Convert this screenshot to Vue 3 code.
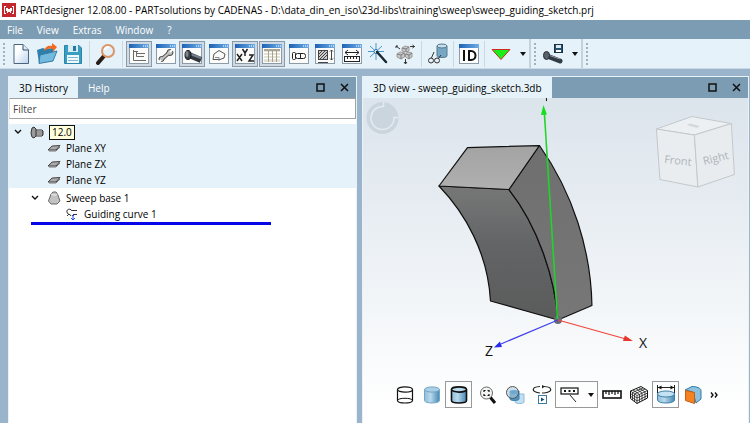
<script setup>
import { ref } from 'vue'

const menus = ['File', 'View', 'Extras', 'Window', '?']

const windowTools = ref([
  { id: 'tree', label: 'History window', on: true },
  { id: 'wrench', label: 'Settings window', on: false },
  { id: 'bolt', label: '3D view', on: true },
  { id: 'sketch', label: 'Sketch view', on: false },
  { id: 'xyz', label: 'Variables', on: true },
  { id: 'table', label: 'Table', on: true },
  { id: 'part', label: 'Part view', on: false },
  { id: 'hatch', label: 'Hatching', on: false },
  { id: 'measure', label: 'Dimensions', on: false },
  { id: 'wand', label: 'Wizard', on: false },
  { id: 'assembly', label: 'Assembly', on: false },
])
const framed = ['tree', 'wrench', 'bolt', 'sketch', 'xyz', 'table', 'part', 'hatch', 'measure']

const planes = ['Plane XY', 'Plane ZX', 'Plane YZ']
const filter = ref('')
</script>

<template>
  <div class="app">
    <header class="title">
      <svg class="logo" viewBox="0 0 14 14" aria-hidden="true">
        <rect width="14" height="14" fill="#c4262c" />
        <path d="M2.500 3V11M2 3.500H4M2 10.500H4M11.500 3V11M12 3.500H10M12 10.500H10" stroke="#fff" fill="none" />
        <path d="M4 5h2v1h2V5h2v3H9v2H8V9H6v1H5V8H4z" fill="#fff" />
      </svg>
      <h1>PARTdesigner 12.08.00 - PARTsolutions by CADENAS - D:\data_din_en_iso\23d-libs\training\sweep\sweep_guiding_sketch.prj</h1>
    </header>

    <nav class="menu">
      <button v-for="m in menus" :key="m" type="button">{{ m }}</button>
    </nav>

    <div class="toolbar" role="toolbar" aria-label="Main">
      <span class="grip"></span>
      <div class="files">
        <button type="button" aria-label="New">
          <svg viewBox="0 0 22 22">
            <defs>
              <linearGradient id="paper" x1="0" y1="0" x2="1" y2="1"><stop offset=".3" stop-color="#fff" /><stop offset="1" stop-color="#b9d3ee" /></linearGradient>
            </defs>
            <path d="M4 1.500H13L18.500 7V20.500H4Z" fill="url(#paper)" stroke="#4b647e" />
            <path d="M13 1.500V7H18.500" fill="#dce9f6" stroke="#35506c" />
          </svg>
        </button>
        <button type="button" aria-label="Open">
          <svg viewBox="0 0 22 22">
            <path d="M1 7L7 5L9 6L17 5V18L3 20Z" fill="#2e7fab" />
            <path d="M4 12L21 8L17 18L3 20.500Z" fill="#74bade" stroke="#347ea6" />
            <path d="M8 8C9 3 13 2 16 3V0L21 4L17 9V6C13 5 11 6 8 8Z" fill="#f26b21" />
          </svg>
        </button>
        <button type="button" aria-label="Save">
          <svg viewBox="0 0 22 22">
            <path d="M2.500 2.500H17L19.500 5V20.500H2.500Z" fill="#3a9ec2" stroke="#2886aa" />
            <rect x="6" y="2" width="10" height="7" fill="#d7ecf5" />
            <rect x="11" y="3" width="3" height="5" fill="#24799c" />
            <rect x="5" y="12" width="12" height="8" fill="#f2f9fc" />
            <path d="M6 14.500H16M6 17.500H16" stroke="#7db9d0" />
          </svg>
        </button>
      </div>
      <i class="sep roomy"></i>
      <button type="button" aria-label="Search">
        <svg viewBox="0 0 22 22">
          <path d="M9 13L3 20" stroke="#2b1d1a" stroke-width="4" stroke-linecap="round" />
          <circle cx="13" cy="8" r="6" fill="#e4f0f8" stroke="#d99567" stroke-width="2" />
          <path d="M10 7C10 5 12 4 14 4" fill="none" stroke="#fff" stroke-width="2" />
        </svg>
      </button>
      <i class="sep roomy"></i>
      <div class="windows">
        <button v-for="t in windowTools" :key="t.id" type="button" :class="{ on: t.on }" :aria-label="t.label" :aria-pressed="t.on" @click="t.on = !t.on">
          <svg viewBox="0 0 22 22">
            <defs>
              <linearGradient id="bar"><stop offset="0" stop-color="#1e62b4" /><stop offset="1" stop-color="#6faee8" /></linearGradient>
            </defs>
            <g v-if="framed.includes(t.id)">
              <rect x="1.500" y="1.500" width="19" height="19" fill="#fbfbfa" stroke="#8d9aa8" />
              <rect x="1" y="1" width="20" height="4" fill="url(#bar)" />
              <path d="M15 3H16M17 3H18M19 3H20" stroke="#fff" />
            </g>
            <g v-if="t.id === 'tree'" fill="none" stroke="#6b6b6b">
              <path d="M5.500 7V17.500H18M5.500 8.500H10M8.500 9V13.500H16M8.500 10.500H17" />
            </g>
            <g v-else-if="t.id === 'wrench'">
              <path d="M7 16L15 9" stroke="#555" stroke-width="4" stroke-linecap="round" />
              <circle cx="15" cy="9.500" r="3" fill="#bbb" stroke="#444" />
              <circle cx="6.500" cy="16" r="2.500" fill="#bbb" stroke="#444" />
              <path d="M7 16L15 9" stroke="#c6c6c6" stroke-width="2" />
              <path d="M15 9L18 6M6 17L4 19" stroke="#fff" stroke-width="2" />
            </g>
            <g v-else-if="t.id === 'bolt'">
              <path d="M8 12L20 17" stroke="#30363d" stroke-width="6" />
              <path d="M9 11L20 15" stroke="#77818b" stroke-width="2" />
              <ellipse cx="7" cy="12" rx="3" ry="4.500" fill="#3b4148" stroke="#15181b" />
              <ellipse cx="6" cy="11" rx="1.500" ry="3" fill="#7d858d" />
            </g>
            <g v-else-if="t.id === 'sketch'" fill="none" stroke="#555">
              <path d="M5 16.500L6 11L11 7.500L17 11L16 15L12 16.500Z" /><path d="M7 14.500H11V18" stroke="#888" />
            </g>
            <g v-else-if="t.id === 'xyz'" fill="none" stroke="#222" stroke-width="1.500">
              <path d="M3 11L8 18M8 11L3 18M8.500 6L11 10L13.500 6M11 10V13M15 12H19L15 18H20" />
            </g>
            <g v-else-if="t.id === 'table'">
              <rect x="3" y="6" width="16" height="13" fill="#e4e1d6" />
              <path d="M3 9.500H19M3 12.500H19M3 15.500H19" stroke="#fff" />
              <path d="M7.500 6V19M11.500 6V19M15.500 6V19" stroke="#a8a292" />
              <rect x="3" y="6" width="16" height="2" fill="#aaa493" />
            </g>
            <g v-else-if="t.id === 'part'" fill="none" stroke="#222">
              <rect x="4.500" y="9.500" width="3" height="7" rx="1" /><rect x="7.500" y="10.500" width="10" height="5" rx="2" /><path d="M12.500 11V15" />
            </g>
            <g v-else-if="t.id === 'hatch'" fill="none" stroke="#444">
              <rect x="4.500" y="7.500" width="9" height="9" fill="#ccc" />
              <path d="M5 11L8 8M5 14L11 8M6 16L13 9M9 16L13 12M17.500 7V17M4 19.500H14M16 8.500L17.500 7L19 8.500M16 15.500L17.500 17L19 15.500" />
            </g>
            <g v-else-if="t.id === 'measure'" fill="none" stroke="#222">
              <path d="M4 9.500H18M7 7L4 9.500L7 12M15 7L18 9.500L15 12" />
              <rect x="3.500" y="13.500" width="15" height="5" /><path d="M6.500 14V16M9.500 14V16M12.500 14V16M15.500 14V16" />
            </g>
            <g v-else-if="t.id === 'wand'">
              <path d="M9 0V17M1 8.500H17M3 3L15 14M15 3L3 14" stroke="#4a98c8" />
              <circle cx="9" cy="8.500" r="2" fill="#fff" stroke="#2574a8" />
              <path d="M10 9L19 19" stroke="#1b2733" stroke-width="2.500" stroke-linecap="round" />
            </g>
            <g v-else-if="t.id === 'assembly'" stroke="#9a9a9a" fill="#c8c8c8">
              <path d="M8 5L11 3L15 4V8L12 9L8 8ZM3 11L6 9L10.500 10V14L7 16L3 14ZM11.500 11L14 9L18 10V14L15 16L11.500 14Z" />
              <path d="M8 5L12 6V9M3 11L7 12V16M11.500 11L15 12V16M12 6L15 4M7 12L10.500 10M15 12L18 10" fill="none" stroke="#7c7c7c" />
              <path d="M6 6L2 3M2 5V3H4M16 3.500H20.500M18.500 2L20.500 3.500L18.500 5M11.500 16V21M10 19L11.500 21L13 19" fill="none" stroke="#333" />
            </g>
          </svg>
        </button>
      </div>
      <i class="sep roomy"></i>
      <button type="button" aria-label="Inspect part">
        <svg viewBox="0 0 22 22">
          <path d="M10 3V13C10 15 20 15 20 13V3Z" fill="#75a7c5" stroke="#54788e" />
          <ellipse cx="15" cy="3" rx="5" ry="2" fill="#c4deec" stroke="#54788e" />
          <path d="M4 16L7 9M11 16L14 12" stroke="#333" fill="none" />
          <circle cx="4" cy="17.500" r="2.500" fill="#e6f1f8" stroke="#333" /><circle cx="10" cy="17.500" r="2.500" fill="#e6f1f8" stroke="#333" />
        </svg>
      </button>
      <i class="sep"></i>
      <button type="button" aria-label="ID">
        <svg viewBox="0 0 22 22">
          <rect x="1.500" y="1.500" width="19" height="19" fill="#fff" stroke="#8d9aa8" />
          <rect x="1" y="1" width="20" height="4" fill="url(#bar)" />
          <path d="M6 7V18M11 8V17H13C19 17 19 8 13 8Z" fill="none" stroke="#111" stroke-width="2" />
        </svg>
      </button>
      <i class="sep"></i>
      <button class="drop" type="button" aria-label="Run">
        <svg viewBox="0 0 22 22"><path d="M2 6.500H20L11 16.500Z" fill="#18ef18" stroke="#d02a20" /></svg>
        <b class="caret"></b>
      </button>
      <i class="edge"></i>
      <span class="grip"></span>
      <button class="drop" type="button" aria-label="Save part">
        <svg viewBox="0 0 22 22">
          <path d="M5 13L18 18" stroke="#333b43" stroke-width="5" stroke-linecap="round" />
          <path d="M6 12L18 16" stroke="#8d98a3" />
          <ellipse cx="4.500" cy="12.500" rx="3" ry="4" fill="#59636d" stroke="#252b30" />
          <rect x="12.500" y="1.500" width="8" height="8" fill="#27516e" stroke="#173044" /><rect x="14" y="2" width="5" height="3" fill="#d8e9f2" /><rect x="14" y="7" width="5" height="2" fill="#fff" />
        </svg>
        <b class="caret"></b>
      </button>
      <i class="edge"></i>
      <span class="grip"></span>
    </div>

    <main class="work">
      <section class="panel history">
        <div class="tabs">
          <button class="tab active" type="button">3D History</button>
          <button class="tab" type="button">Help</button>
          <span class="fill"></span>
          <button class="ctl" type="button" aria-label="Maximize"><svg viewBox="0 0 9 9"><path d="M1 1H8V8H1Z" /></svg></button>
          <button class="ctl" type="button" aria-label="Close"><svg viewBox="0 0 9 9"><path d="M1 1L8 8M8 1L1 8" /></svg></button>
        </div>
        <input v-model="filter" class="filter" type="text" placeholder="Filter" aria-label="Filter" />
        <div class="root">
          <div class="row">
            <svg class="chev" viewBox="0 0 8 8"><path d="M1 2L4 5L7 2" /></svg>
            <svg class="ico" viewBox="0 0 14 14">
              <path d="M5 5H12L13 6V10L12 11H5Z" fill="#777" stroke="#333" /><path d="M7 5V11M9 5V11M11 5V11" stroke="#bbb" />
              <path d="M2 3L4 2L6 4V11L4 13L2 12L1 8Z" fill="#9a9a9a" stroke="#333" />
            </svg>
            <span class="version">12.0</span>
          </div>
          <div v-for="p in planes" :key="p" class="row deep">
            <svg class="ico" viewBox="0 0 14 14"><path d="M1 9L5 5L13 4.500L9 9Z" fill="#aaa" stroke="#444" /><path d="M2 10H9L13 6" fill="none" stroke="#777" /></svg>
            <span>{{ p }}</span>
          </div>
        </div>
        <div class="feature">
          <div class="row sub">
            <svg class="chev" viewBox="0 0 8 8"><path d="M1 2L4 5L7 2" /></svg>
            <svg class="ico" viewBox="0 0 14 14"><path d="M4 3L6 1H9L10.500 3L13 10L10 13H4L1.500 10Z" fill="#c2c2c2" stroke="#666" /><path d="M4 3L6 4H9L10.500 3" fill="none" stroke="#eee" /></svg>
            <span>Sweep base 1</span>
          </div>
          <div class="row leaf">
            <svg class="ico" viewBox="0 0 14 14"><path d="M7 4C6 1 1 2 2 5C2 8 6 7 6 9M2 9L4 7M7 3.500H12M8 7.500H12" fill="none" stroke="#333" /><path d="M7 8.500H9M8 8V13M6 11L8 13L10 11" fill="none" stroke="#1b51dd" /></svg>
            <span>Guiding curve 1</span>
          </div>
        </div>
        <div class="marker"></div>
      </section>

      <section class="panel view">
        <div class="tabs">
          <button class="tab active" type="button">3D view - sweep_guiding_sketch.3db</button>
          <span class="fill"></span>
          <button class="ctl" type="button" aria-label="Maximize"><svg viewBox="0 0 9 9"><path d="M1 1H8V8H1Z" /></svg></button>
          <button class="ctl" type="button" aria-label="Close"><svg viewBox="0 0 9 9"><path d="M1 1L8 8M8 1L1 8" /></svg></button>
        </div>
        <div class="canvas">
          <svg class="scene" viewBox="363 98 385 278" role="img" aria-label="Swept solid with X and Z axes">
            <defs>
              <linearGradient id="front" x1="0" y1="0" x2="0" y2="1"><stop offset="0" stop-color="#777" /><stop offset=".45" stop-color="#626465" /><stop offset="1" stop-color="#5b5b5b" /></linearGradient>
              <linearGradient id="top" x1="0" y1="0" x2="0" y2="1"><stop offset="0" stop-color="#a3a3a3" /><stop offset="1" stop-color="#b0b0b0" /></linearGradient>
              <linearGradient id="side" x1="0" y1="0" x2="0" y2="1"><stop offset="0" stop-color="#6f6f6f" /><stop offset="1" stop-color="#777" /></linearGradient>
            </defs>
            <circle cx="382.500" cy="118" r="16" fill="#cbd5dd" />
            <path d="M383.500 106.500A11.500 11.500 0 1 0 394 117.500H398" fill="none" stroke="#e5ebf0" stroke-width="1.500" />
            <path d="M383.500 102V107" stroke="#e5ebf0" stroke-width="1.500" />

            <g stroke="#111" stroke-width="1.200" stroke-linejoin="round">
              <path d="M439 186C465 213 488 253 490.500 301L558 320C555 278 538 226 509 189.500Z" fill="url(#front)" />
              <path d="M509 189.500C538 226 555 278 558 320L592 305.500C591 250 573 193 539.500 145.500Z" fill="url(#side)" />
              <path d="M439 186L467.500 147.500L539.500 145.500L509 189.500Z" fill="url(#top)" />
            </g>

            <circle cx="558" cy="320" r="4" fill="#666b70" />
            <path d="M557.500 319L544.500 114" stroke="#1fd52a" stroke-width="1.600" />
            <path d="M543.500 105L541 115L547 114.500Z" fill="#16df20" />
            <path d="M546.500 98V101" stroke="#111" />
            <path d="M558 320L626 339" stroke="#f0453b" stroke-width="1.200" />
            <path d="M633 341L623 341L625 335.500Z" fill="#e8352d" />
            <path d="M558 320L501 344" stroke="#4242ec" stroke-width="1.200" />
            <path d="M494 347.500L500 341.500L502 347Z" fill="#2929ee" />
            <text x="639" y="348" class="axis">X</text>
            <text x="485" y="356" class="axis">Z</text>

            <g stroke="#c3c8cb" stroke-linejoin="round">
              <path d="M656.500 129L692 116.500L731.500 123.500L694.500 135Z" fill="#edf0f2" />
              <path d="M656.500 129L694.500 135L698 187L660 179.500Z" fill="#e9edf0" />
              <path d="M694.500 135L731.500 123.500L734.500 174.500L698 187Z" fill="#e8ecef" />
            </g>
            <path d="M687 125L690 123.500L700 126L697 128Z" fill="#d4d8db" />
            <text x="664" y="163" class="face" transform="rotate(6 664 163)">Front</text>
            <text x="704" y="165" class="face" transform="rotate(-14 704 165)">Right</text>
          </svg>

          <div class="viewbar" role="toolbar" aria-label="View">
            <button type="button" aria-label="Wireframe">
              <svg viewBox="0 0 20 20"><path d="M2.500 4.500V15.500C2.500 18.800 17.500 18.800 17.500 15.500V4.500" fill="#fff" stroke="#111" stroke-width="1.200" /><ellipse cx="10" cy="4.500" rx="7.500" ry="2.600" fill="#fff" stroke="#111" stroke-width="1.200" /><path d="M2.500 15.500C2.500 12.500 17.500 12.500 17.500 15.500" fill="none" stroke="#111" /></svg>
            </button>
            <button type="button" aria-label="Shaded">
              <svg viewBox="0 0 20 20">
                <defs><linearGradient id="blue"><stop offset="0" stop-color="#8fbddb" /><stop offset=".4" stop-color="#b9d9ec" /><stop offset="1" stop-color="#4688b2" /></linearGradient></defs>
                <path d="M2.500 4.500V15.500C2.500 18.800 17.500 18.800 17.500 15.500V4.500" fill="url(#blue)" stroke="#74a6c7" /><ellipse cx="10" cy="4.500" rx="7.500" ry="2.600" fill="#a9cfe6" stroke="#74a6c7" />
              </svg>
            </button>
            <button class="boxed" type="button" aria-label="Shaded with edges" aria-pressed="true">
              <svg viewBox="0 0 20 20"><path d="M2.500 4.500V15.500C2.500 18.800 17.500 18.800 17.500 15.500V4.500" fill="url(#blue)" stroke="#111" stroke-width="1.600" /><ellipse cx="10" cy="4.500" rx="7.500" ry="2.600" fill="#b9d9ec" stroke="#111" stroke-width="1.600" /></svg>
            </button>
            <i class="vsep"></i>
            <button type="button" aria-label="Zoom all">
              <svg viewBox="0 0 20 20"><path d="M12 12L17 18" stroke="#111" stroke-width="3" /><circle cx="8.500" cy="8" r="6" fill="#f4f4f4" stroke="#666" /><path d="M6 7V5.500H7.500M9.500 5.500H11V7M11 9V10.500H9.500M7.500 10.500H6V9" fill="none" stroke="#111" stroke-width="1.200" /></svg>
            </button>
            <button type="button" aria-label="Transparency">
              <svg viewBox="0 0 20 20"><path d="M10 9V17C10 19 19 19 19 17V9Z" fill="#c2e0f2" stroke="#8cbcd8" /><path d="M5 6V14C5 16 14 16 14 14V6Z" fill="#4f93c0" stroke="#3c7fae" /><circle cx="7.500" cy="7.500" r="6" fill="#aacbe0" fill-opacity=".6" stroke="#555" /><ellipse cx="9" cy="7" rx="3.500" ry="2" fill="#6fa8cd" /></svg>
            </button>
            <button type="button" aria-label="Animate rotation">
              <svg viewBox="0 0 20 20"><path d="M8 8C-1 7 -1 2 8 1.500M12 1.500C21 2 21 7 12 8H10" fill="none" stroke="#222" stroke-width="1.200" /><path d="M10 0L13 1.500L10 3.500" fill="#222" /><rect x="6.500" y="10.500" width="8" height="8" fill="#fff" stroke="#3b7ba5" /><path d="M9 12.500V16.500L12.500 14.500Z" fill="#174b72" /></svg>
            </button>
            <button class="boxed wide" type="button" aria-label="Labels">
              <svg viewBox="0 0 20 20"><rect x="1" y="3" width="17" height="6" fill="#fff" stroke="#111" stroke-width="1.200" /><path d="M4 6H6M8.500 6H10.500M13 6H15" stroke="#111" stroke-width="2" /><path d="M10 10L16 17" stroke="#222" /></svg>
              <b class="caret"></b>
            </button>
            <button type="button" aria-label="Measure">
              <svg viewBox="0 0 20 20"><rect x="1" y="6" width="18" height="7" fill="#fff" stroke="#111" stroke-width="1.600" /><path d="M4 6V9M7 6V10M10 6V9M13 6V10M16 6V9" stroke="#111" stroke-width="1.200" /></svg>
            </button>
            <button type="button" aria-label="Mesh">
              <svg viewBox="0 0 20 20"><path d="M1.500 6L12 1.500L18.500 5.500V13L8 18.500L1.500 13.500Z" fill="#fff" stroke="#111" /><path d="M1.500 6L8 10.500V18.500M8 10.500L18.500 5.500M1.500 8.500L8 13L18.500 8M1.500 11L8 16L18.500 10.500M3.500 7.500V15M5.500 9V16.500M10.500 9.500V17M13 8V16M16 7V14.500M4 5L10.500 9.500M7 3.500L13 8M9.500 2.500L16 7M3.500 7.500L14 3M5.500 9L16 4" fill="none" stroke="#222" stroke-width=".8" /></svg>
            </button>
            <button class="boxed" type="button" aria-label="Show dimensions" aria-pressed="true">
              <svg viewBox="0 0 20 20"><path d="M1.500 0V8M18.500 0V8M2 2.500H18" stroke="#222" /><path d="M2 2.500L5.500 .5V4.500ZM18 2.500L14.500 .5V4.500Z" fill="#111" /><path d="M1.500 9V15C1.500 19 18.500 19 18.500 15V9Z" fill="url(#blue)" stroke="#3f80a8" /><ellipse cx="10" cy="9" rx="8.500" ry="3" fill="#c4e2f2" stroke="#3f80a8" /></svg>
            </button>
            <button type="button" aria-label="Section">
              <svg viewBox="0 0 20 20"><path d="M2 5L9 1.500C13 1.500 18 3 18 5.500V14L13 18L10 7Z" fill="#8cc1df" stroke="#327aa4" /><path d="M2.500 5.500L11.500 7.500V18.500L2.500 15.500Z" fill="#f58220" stroke="#c75e12" /></svg>
            </button>
            <button class="more" type="button" aria-label="More">
              <svg viewBox="0 0 8 8"><path d="M1 1.500L3 4L1 6.500M5 1.500L7 4L5 6.500" fill="none" stroke="#111" stroke-width="1.400" /></svg>
            </button>
          </div>
        </div>
      </section>
    </main>
  </div>
</template>

<style>
body {
  background: #9ab4cb;
}
</style>

<style scoped>
.app {
  display: flex;
  flex-direction: column;
  min-height: 100vh;
  font: 10px/16px "Open Sans", "Noto Sans", sans-serif;
  color: #000;
}
button {
  font: inherit;
  color: inherit;
  background: none;
  border: 0;
  padding: 0;
  margin: 0;
}
svg {
  display: block;
  flex: none;
}
.title {
  display: flex;
  align-items: center;
  gap: 4px;
  height: 20px;
  padding: 0 2px;
  background: #fff;
}
.logo {
  width: 14px;
  height: 14px;
}
h1 {
  margin: 0;
  font-size: 10px;
  font-weight: 400;
  white-space: nowrap;
}
.menu {
  display: flex;
  gap: 14px;
  height: 19px;
  padding: 0 7px;
  background: #7b9cb3;
  color: #fff;
}
.toolbar {
  display: flex;
  align-items: center;
  height: 30px;
  background: #e6f2f9;
  border-bottom: 1px solid #cbd9e4;
  box-sizing: border-box;
}
.toolbar button {
  display: flex;
  align-items: center;
  justify-content: center;
  flex: none;
  width: 26px;
  height: 26px;
  box-sizing: border-box;
}
.toolbar svg {
  width: 22px;
  height: 22px;
}
.toolbar .on {
  background: #cfdae4;
  border: 1px solid #8d99a6;
}
.files,
.windows {
  display: flex;
  flex: none;
}
.windows {
  width: 292px;
  justify-content: space-between;
}
.grip {
  flex: none;
  width: 2px;
  height: 22px;
  margin: 0 3px;
  background: repeating-linear-gradient(#a5b0ba 0 2px, transparent 2px 4px);
}
.sep {
  flex: none;
  width: 1px;
  height: 26px;
  margin: 0 2px;
  background: #ccd8e1;
}
.sep.roomy {
  margin: 0 3px;
}
.edge {
  flex: none;
  width: 2px;
  height: 29px;
  background: #c4d2dd;
}
.toolbar .drop {
  width: 42px;
  gap: 8px;
}
.caret {
  border: 3px solid transparent;
  border-top: 4px solid #111;
  border-bottom: 0;
}
.work {
  display: flex;
  flex: 1;
  gap: 5px;
  padding: 7px 1px 0 8px;
}
.panel {
  display: flex;
  flex-direction: column;
  min-width: 0;
  box-sizing: border-box;
  border: 1px solid #eaf2f8;
  border-bottom: 0;
  background: #fff;
}
.history {
  flex: 349 1 0;
}
.view {
  flex: 387 1 0;
}
.tabs {
  display: flex;
  height: 21px;
  background: #7b9cb3;
}
.tab {
  padding: 0 10px;
  color: #fff;
  white-space: nowrap;
}
.tab.active {
  background: #e6f2f9;
  color: #000;
}
.fill {
  flex: 1;
}
.ctl {
  display: flex;
  align-items: center;
  justify-content: center;
  width: 24px;
}
.ctl svg {
  width: 9px;
  height: 9px;
}
.ctl path {
  fill: none;
  stroke: #111;
  stroke-width: 1.5;
}
.filter {
  height: 21px;
  padding: 0 3px;
  box-sizing: border-box;
  border: 1px solid #a2a2a2;
  border-left-color: #ddd;
  background: #fff;
  font: inherit;
  outline: 0;
}
.filter::placeholder {
  color: #444;
  opacity: 1;
}
.root {
  margin-top: 5px;
  background: #e5f2f9;
}
.feature {
  padding-top: 2px;
}
.row {
  display: flex;
  align-items: center;
  gap: 5px;
  height: 16px;
  padding-left: 5px;
}
.deep {
  padding-left: 38px;
}
.sub {
  padding-left: 22px;
}
.leaf {
  padding-left: 56px;
}
.chev {
  width: 8px;
  height: 8px;
  margin-right: 3px;
}
.chev path {
  fill: none;
  stroke: #111;
  stroke-width: 1.4;
}
.ico {
  width: 14px;
  height: 14px;
}
.version {
  padding: 0 2px;
  border: 1px solid #111;
  background: #ffffdc;
  line-height: 13px;
}
.marker {
  width: 69%;
  height: 3px;
  margin-left: 22px;
  background: #0505e8;
}
.canvas {
  display: flex;
  flex-direction: column;
  flex: 1;
  background: linear-gradient(#dce4ec, #e7edf2 35%, #fff 95%);
}
.scene {
  width: 100%;
  flex: 1;
}
.axis {
  font: 14px "Open Sans", sans-serif;
  fill: #111;
}
.face {
  font: 11px "Open Sans", sans-serif;
  fill: #b0b5b9;
}
.viewbar {
  display: flex;
  align-items: center;
  height: 27px;
  padding: 5px 28px 15px;
}
.viewbar button {
  display: flex;
  align-items: center;
  justify-content: center;
  flex: none;
  width: 27px;
  height: 27px;
  box-sizing: border-box;
}
.viewbar svg {
  width: 20px;
  height: 20px;
}
.viewbar .boxed {
  border: 1px solid #999;
}
.viewbar .wide {
  width: 43px;
  gap: 8px;
}
.vsep {
  width: 1px;
  height: 24px;
  margin: 0 1px;
  background: #d4dce2;
}
.viewbar .more {
  width: 16px;
}
.viewbar .more svg {
  width: 8px;
  height: 8px;
}
</style>
